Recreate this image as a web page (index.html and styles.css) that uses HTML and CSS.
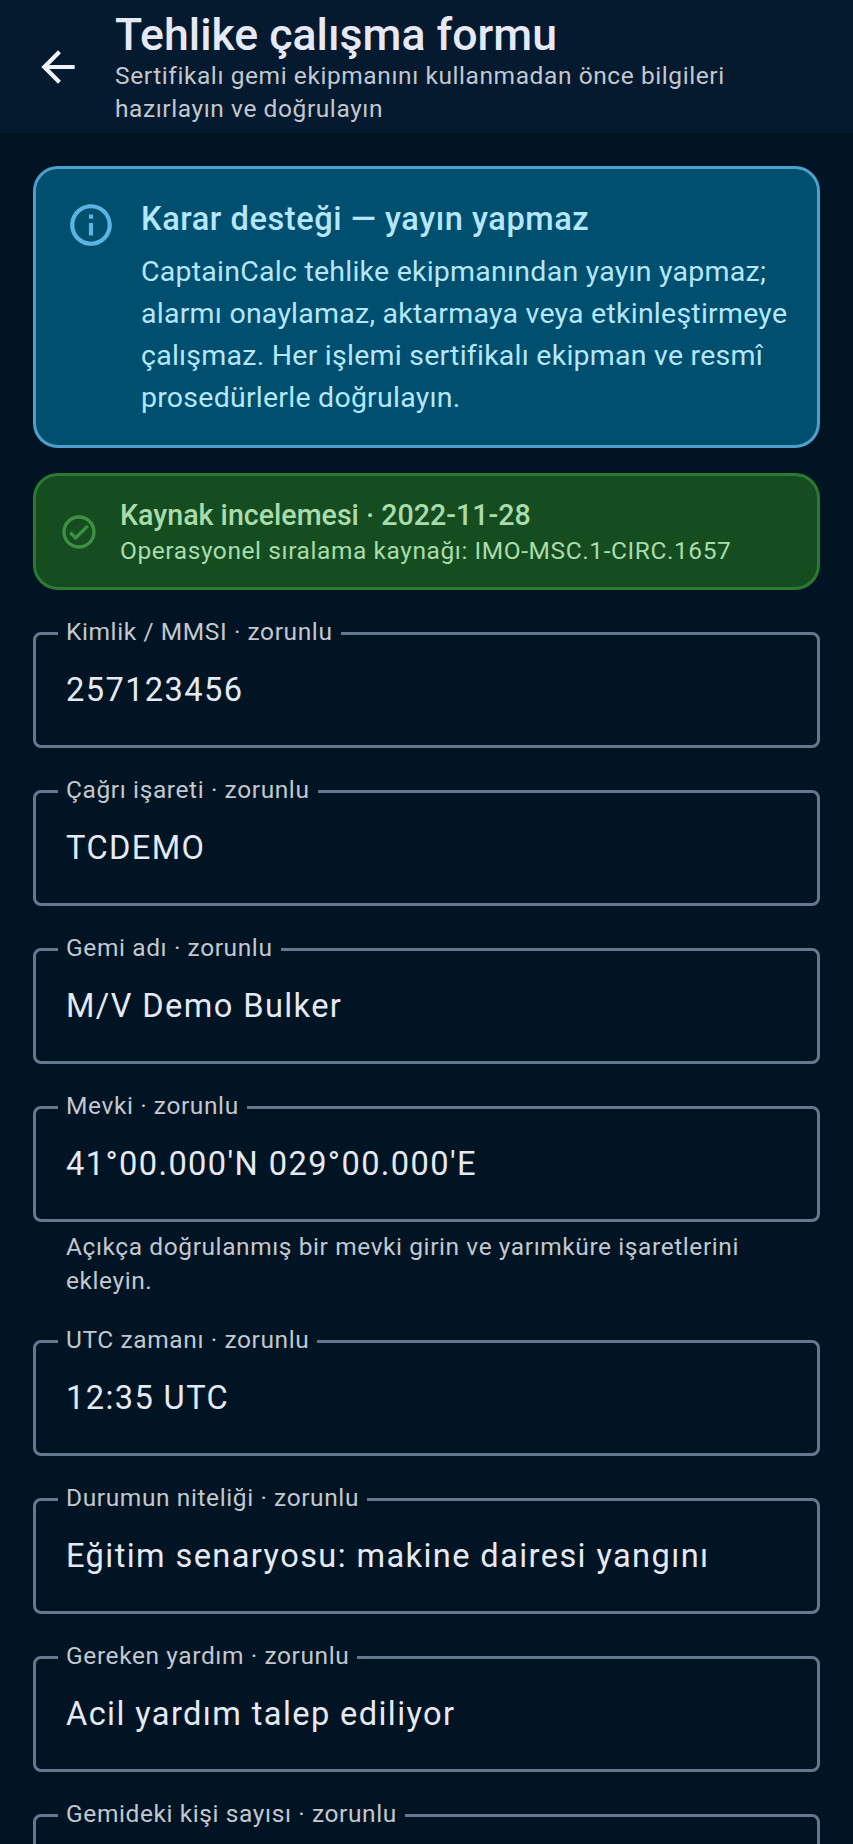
FILE: index.html
```html
<!DOCTYPE html>
<html lang="tr">
<head>
  <meta charset="UTF-8" />
  <title>Tehlike çalışma formu</title>
  <link rel="stylesheet" href="styles.css">
</head>
<body>
  <header class="topbar">
    <svg class="back-icon" viewBox="0 0 24 24"><path d="M20 11H7.83l5.59-5.59L12 4l-8 8 8 8 1.41-1.41L7.83 13H20v-2z"/></svg>
    <div class="topbar-text">
      <h1>Tehlike çalışma formu</h1>
      <p>Sertifikalı gemi ekipmanını kullanmadan önce bilgileri hazırlayın ve doğrulayın</p>
    </div>
  </header>

  <main class="content">
    <section class="notice">
      <svg class="notice-icon" viewBox="0 0 24 24"><path d="M11 7h2v2h-2zm0 4h2v6h-2zm1-9C6.48 2 2 6.48 2 12s4.48 10 10 10 10-4.48 10-10S17.52 2 12 2zm0 18c-4.41 0-8-3.59-8-8s3.59-8 8-8 8 3.59 8 8-3.59 8-8 8z"/></svg>
      <div>
        <h2>Karar desteği — yayın yapmaz</h2>
        <p>CaptainCalc tehlike ekipmanından yayın yapmaz; alarmı onaylamaz, aktarmaya veya etkinleştirmeye çalışmaz. Her işlemi sertifikalı ekipman ve resmî prosedürlerle doğrulayın.</p>
      </div>
    </section>

    <section class="source">
      <svg class="source-icon" viewBox="0 0 24 24"><path d="M12 2C6.48 2 2 6.48 2 12s4.48 10 10 10 10-4.48 10-10S17.52 2 12 2zm0 18c-4.41 0-8-3.59-8-8s3.59-8 8-8 8 3.59 8 8-3.59 8-8 8zm4.59-12.42L10 14.17l-2.59-2.58L6 13l4 4 8-8z"/></svg>
      <div class="source-text">
        <h3>Kaynak incelemesi · 2022-11-28</h3>
        <p>Operasyonel sıralama kaynağı: IMO-MSC.1-CIRC.1657</p>
      </div>
    </section>

    <div class="field">
      <label>Kimlik / MMSI · zorunlu</label>
      <div class="value">257123456</div>
    </div>
    <div class="field">
      <label>Çağrı işareti · zorunlu</label>
      <div class="value">TCDEMO</div>
    </div>
    <div class="field">
      <label>Gemi adı · zorunlu</label>
      <div class="value">M/V Demo Bulker</div>
    </div>
    <div class="field has-help">
      <label>Mevki · zorunlu</label>
      <div class="value">41°00.000'N 029°00.000'E</div>
      <p class="help">Açıkça doğrulanmış bir mevki girin ve yarımküre işaretlerini ekleyin.</p>
    </div>
    <div class="field">
      <label>UTC zamanı · zorunlu</label>
      <div class="value">12:35 UTC</div>
    </div>
    <div class="field">
      <label>Durumun niteliği · zorunlu</label>
      <div class="value">Eğitim senaryosu: makine dairesi yangını</div>
    </div>
    <div class="field">
      <label>Gereken yardım · zorunlu</label>
      <div class="value">Acil yardım talep ediliyor</div>
    </div>
    <div class="field">
      <label>Gemideki kişi sayısı · zorunlu</label>
      <div class="value"></div>
    </div>
  </main>
</body>
</html>
```

FILE: styles.css
```css
html, body {
  margin: 0;
  height: 1844px;
  overflow: hidden;
}
body {
  font-family: Roboto, "Noto Sans", sans-serif;
  background-color: #001423;
  color: #e6e9f4;
}
h1, h2, h3, p {
  margin: 0;
}

.topbar {
  height: 133px;
  box-sizing: border-box;
  display: flex;
  align-items: center;
  padding-left: 33px;
  background-color: #051a2e;
}
.back-icon {
  width: 50px;
  height: 50px;
  flex: none;
  fill: #f0f2fa;
  margin-right: 32px;
}
.topbar-text {
  flex: 1;
  padding-right: 40px;
  margin-top: 2px;
}
.topbar h1 {
  font-size: 44.6px;
  line-height: 48px;
  font-weight: 500;
}
.topbar p {
  font-size: 24.5px;
  line-height: 33px;
  letter-spacing: 0.58px;
  color: #c3c7cf;
}

.content {
  padding: 33px 33px 0;
}

.notice {
  height: 282px;
  box-sizing: border-box;
  display: flex;
  padding: 28px 20px 0 30px;
  border: 3px solid #4e9fcb;
  border-radius: 25px;
  background-color: #004f6e;
  color: #b5e6fb;
}
.notice-icon {
  width: 50px;
  height: 50px;
  flex: none;
  fill: #5cb4e2;
  margin: 3px 25px 0 0;
}
.notice h2 {
  font-size: 32.6px;
  line-height: 44px;
  font-weight: 500;
  letter-spacing: 0.55px;
  margin-bottom: 10px;
}
.notice p {
  font-size: 28.5px;
  line-height: 42px;
  letter-spacing: 0.24px;
}

.source {
  height: 117px;
  box-sizing: border-box;
  display: flex;
  align-items: center;
  margin-top: 25px;
  padding: 0 30px 0 23px;
  border: 3px solid #2b7a33;
  border-radius: 25px;
  background-color: #154d21;
  color: #a9dcac;
}
.source-icon {
  width: 40px;
  height: 40px;
  flex: none;
  fill: #3e9142;
  margin-right: 21px;
}
.source-text {
  margin-top: 1px;
}
.source h3 {
  font-size: 28.6px;
  line-height: 36px;
  font-weight: 500;
}
.source p {
  font-size: 24.5px;
  line-height: 35px;
  letter-spacing: 0.58px;
}

.field {
  position: relative;
  margin-top: 42px;
}
.value {
  height: 116px;
  box-sizing: border-box;
  padding: 0 30px 1px;
  display: flex;
  align-items: center;
  border: 3px solid #64798f;
  border-radius: 8px;
  font-size: 32.6px;
  letter-spacing: 1.4px;
  color: #e6e9f4;
}
.field label {
  position: absolute;
  left: 25px;
  top: -15px;
  padding: 0 8px;
  font-size: 24.5px;
  line-height: 30px;
  letter-spacing: 0.6px;
  color: #c3c7cf;
  background-color: #001423;
}
.help {
  padding: 8px 33px 0;
  font-size: 24.5px;
  line-height: 33.6px;
  letter-spacing: 0.58px;
  color: #c3c7cf;
}
.has-help + .field {
  margin-top: 43px;
}
```
